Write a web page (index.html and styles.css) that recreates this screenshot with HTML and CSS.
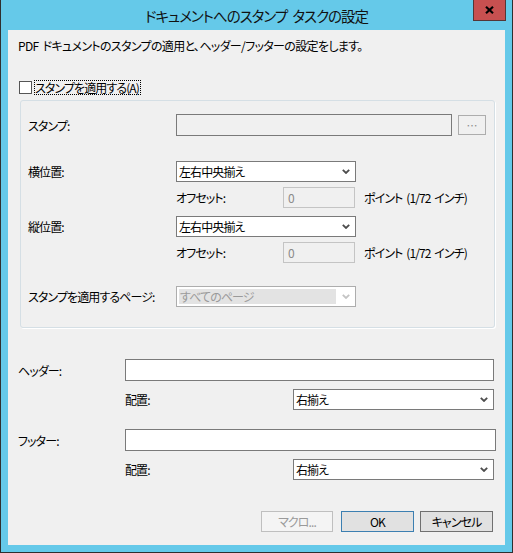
FILE: index.html
```html
<!DOCTYPE html>
<html lang="ja">
<head>
<meta charset="utf-8">
<title>ドキュメントへのスタンプ タスクの設定</title>
<link rel="stylesheet" href="styles.css">
</head>
<body>
<div class="window">
  <div class="titlebar">
    <div class="title">ドキュメントへのスタンプ タスクの設定</div>
    <div class="close">
      <svg width="9" height="8" viewBox="0 0 9 8"><path d="M1 0.8 L8 7.2 M8 0.8 L1 7.2" stroke="#000" stroke-width="2.2" fill="none"/></svg>
    </div>
  </div>
  <div class="client">
    <p class="intro">PDF ドキュメントのスタンプの適用と、ヘッダー/フッターの設定をします。</p>

    <div class="check-row">
      <span class="checkbox"></span>
      <span class="check-label">スタンプを適用する(A)</span>
    </div>

    <div class="group">
      <div class="row row-stamp">
        <span class="label">スタンプ:</span>
        <span class="field field-readonly"></span>
        <span class="browse">…</span>
      </div>
      <div class="row row-pos">
        <span class="label">横位置:</span>
        <span class="combo combo-pos"><span>左右中央揃え</span><svg class="chev" width="8" height="5" viewBox="0 0 8 5"><path d="M0.8 0.8 L4 4 L7.2 0.8" stroke="#4d4d4d" stroke-width="1.8" fill="none"/></svg></span>
      </div>
      <div class="row row-offset">
        <span class="sublabel">オフセット:</span>
        <span class="field field-off">0</span>
        <span class="unit">ポイント (1/72 インチ)</span>
      </div>
      <div class="row row-pos row-vpos">
        <span class="label">縦位置:</span>
        <span class="combo combo-pos"><span>左右中央揃え</span><svg class="chev" width="8" height="5" viewBox="0 0 8 5"><path d="M0.8 0.8 L4 4 L7.2 0.8" stroke="#4d4d4d" stroke-width="1.8" fill="none"/></svg></span>
      </div>
      <div class="row row-offset">
        <span class="sublabel">オフセット:</span>
        <span class="field field-off">0</span>
        <span class="unit">ポイント (1/72 インチ)</span>
      </div>
      <div class="row row-pages">
        <span class="label">スタンプを適用するページ:</span>
        <span class="combo combo-off"><span class="sel">すべてのページ</span><svg class="chev" width="8" height="5" viewBox="0 0 8 5"><path d="M0.8 0.8 L4 4 L7.2 0.8" stroke="#c4c4c4" stroke-width="1.8" fill="none"/></svg></span>
      </div>
    </div>

    <div class="row row-text row-header">
      <span class="outer-label">ヘッダー:</span>
      <span class="field field-edit field-header"></span>
    </div>
    <div class="row row-align">
      <span class="align-label">配置:</span>
      <span class="combo combo-align"><span>右揃え</span><svg class="chev" width="8" height="5" viewBox="0 0 8 5"><path d="M0.8 0.8 L4 4 L7.2 0.8" stroke="#4d4d4d" stroke-width="1.8" fill="none"/></svg></span>
    </div>
    <div class="row row-text row-footer">
      <span class="outer-label">フッター:</span>
      <span class="field field-edit field-footer"></span>
    </div>
    <div class="row row-align">
      <span class="align-label">配置:</span>
      <span class="combo combo-align"><span>右揃え</span><svg class="chev" width="8" height="5" viewBox="0 0 8 5"><path d="M0.8 0.8 L4 4 L7.2 0.8" stroke="#4d4d4d" stroke-width="1.8" fill="none"/></svg></span>
    </div>

    <div class="buttons">
      <span class="btn btn-disabled">マクロ...</span>
      <span class="btn btn-default">OK</span>
      <span class="btn btn-cancel">キャンセル</span>
    </div>
  </div>
</div>
</body>
</html>
```

FILE: styles.css
```css
* { box-sizing: border-box; }

html, body {
  margin: 0;
  padding: 0;
}

body {
  width: 513px;
  height: 553px;
  overflow: hidden;
  font-family: "Noto Sans CJK JP", "Noto Sans", sans-serif;
  font-size: 12px;
  font-feature-settings: "palt";
  letter-spacing: -0.9px;
  word-spacing: 2px;
  color: #000;
  background: #fff;
}

/* window frame */
.window {
  width: 513px;
  height: 553px;
  background: #65c9e9;
  border: 1px solid #2f2f2f;
  border-top: 0;
  display: flex;
  flex-direction: column;
}

.titlebar {
  height: 30px;
  flex: none;
  display: grid;
  grid-template-columns: 1fr auto 1fr;
}

.title {
  grid-column: 2;
  font-size: 14.5px;
  letter-spacing: -1px;
  word-spacing: 3px;
  line-height: 30px;
  padding-top: 1px;
  white-space: nowrap;
  color: #111;
}

.close {
  grid-column: 3;
  justify-self: end;
  align-self: start;
  width: 33px;
  height: 21px;
  margin-right: 6px;
  background: #c75050;
  border: 1px solid #553636;
  border-top: 0;
  display: flex;
  align-items: center;
  justify-content: center;
  padding-bottom: 1px;
}

.client {
  width: 497px;
  height: 515px;
  margin: 0 7px;
  background: #f0f0f0;
  display: flex;
  flex-direction: column;
  flex: none;
}

.intro {
  margin: 8px 0 0 10px;
  height: 16px;
  line-height: 16px;
  white-space: nowrap;
  letter-spacing: -0.65px;
}

/* checkbox */
.check-row {
  margin: 26px 0 0 11px;
  height: 15px;
  display: flex;
  align-items: center;
}

.checkbox {
  width: 13px;
  height: 13px;
  background: #fff;
  border: 1px solid #555;
}

.check-label {
  margin-left: 2px;
  height: 15px;
  line-height: 13px;
  padding: 0 1px 0 0;
  border: 1px dotted #000;
  white-space: nowrap;
}

/* group box */
.group {
  margin: 5px 0 0 12px;
  width: 475px;
  height: 228px;
  border: 1px solid #d5dfe5;
  border-radius: 3px;
  box-shadow: 1px 1px 0 #fff;
  padding-left: 7px;
  display: flex;
  flex-direction: column;
  flex: none;
}

.row {
  display: flex;
  align-items: center;
  flex: none;
  white-space: nowrap;
}

.label {
  width: 148px;
  flex: none;
}

.row-stamp { height: 22px; margin-top: 13px; }
.row-pos { height: 21px; margin-top: 25px; }
.row-vpos { margin-top: 8px; }
.row-offset { height: 21px; margin-top: 5px; padding-left: 148px; }
.row-pages { height: 21px; margin-top: 23px; }

.sublabel {
  width: 107px;
  flex: none;
}

.unit {
  margin-left: 9px;
}

/* text boxes */
.field {
  height: 100%;
  flex: none;
  display: flex;
  align-items: center;
  padding-left: 4px;
}

.field-readonly {
  width: 276px;
  background: #f0f0f0;
  border: 1px solid #7a7a7a;
}

.field-off {
  width: 72px;
  background: #f0f0f0;
  border: 1px solid #c4c4c4;
  color: #8a8a8a;
  align-items: flex-start;
  padding-top: 1px;
}

.field-edit {
  background: #fff;
  border: 1px solid #7a7a7a;
}

.field-header { width: 369px; }
.field-footer { width: 371px; }

.browse {
  margin-left: 6px;
  width: 28px;
  height: 20px;
  border: 1px solid #adadad;
  background: #f0f0f0;
  color: #8c8c8c;
  display: flex;
  align-items: center;
  justify-content: center;
  font-size: 11px;
  letter-spacing: 0;
  line-height: 1;
}

/* drop-down lists */
.combo {
  height: 100%;
  flex: none;
  display: flex;
  align-items: center;
  justify-content: space-between;
  background: #fff;
  border: 1px solid #7a7a7a;
  padding: 0 5px 0 2px;
}

.combo-pos { width: 180px; }
.combo-align { width: 201px; }

.combo-off {
  width: 180px;
  border-color: #adadad;
  padding: 2px 5px 2px 2px;
  color: #9a9a9a;
}

.combo-off .sel {
  align-self: stretch;
  width: 157px;
  background: #e3e3e3;
  display: flex;
  align-items: center;
  padding-left: 1px;
}

.chev { flex: none; }

/* header / footer */
.row-text { height: 22px; padding-left: 10px; }
.row-header { margin-top: 31px; }
.row-footer { margin-top: 19px; }

.outer-label {
  width: 107px;
  flex: none;
}

.row-align {
  height: 21px;
  margin-top: 8px;
  padding-left: 117px;
}

.align-label {
  width: 168px;
  flex: none;
}

/* dialog buttons */
.buttons {
  margin-top: 31px;
  height: 21px;
  display: flex;
  justify-content: flex-end;
  padding-right: 12px;
}

.btn {
  width: 73px;
  height: 21px;
  display: flex;
  align-items: center;
  justify-content: center;
  background: #e1e1e1;
  border: 1px solid #adadad;
  white-space: nowrap;
}

.btn-disabled {
  width: 72px;
  background: #f4f4f4;
  border-color: #bfbfbf;
  color: #9a9a9a;
}

.btn-default {
  margin-left: 8px;
  border-color: #3c7fb1;
}

.btn-cancel {
  margin-left: 6px;
  border-color: #707070;
}
```
